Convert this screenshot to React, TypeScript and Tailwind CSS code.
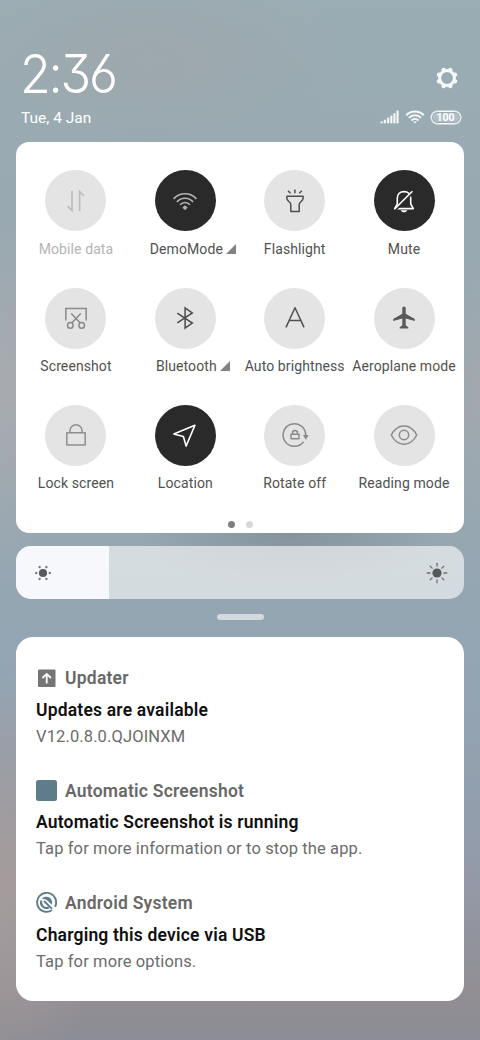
import type { ReactNode } from 'react';
import clsx from 'clsx';

interface Tile {
    label: string;
    icon: ReactNode;
    active?: boolean;
    disabled?: boolean;
    expandable?: boolean;
    tone?: string;
}

interface Notice {
    app: string;
    title: string;
    text: string;
    icon: ReactNode;
}

const Glyph = ({ children, width = 1.5 }: { children: ReactNode; width?: number }) => (
    <svg width="32" height="32" viewBox="0 0 32 32" fill="none" stroke="currentColor" strokeWidth={width} strokeLinejoin="round">
        {children}
    </svg>
);

const tiles: Tile[] = [
    {
        label: 'Mobile data',
        disabled: true,
        tone: 'text-[#bdbdbd]',
        icon: (
            <Glyph width={1.7}>
                <path d="M12 6v19.4l-4.4-4.2" strokeLinejoin="miter" />
                <path d="M19.6 26V6.6l4.4 4.4" strokeLinejoin="miter" />
            </Glyph>
        )
    },
    {
        label: 'DemoMode',
        active: true,
        expandable: true,
        tone: 'text-[#b5b5b5]',
        icon: (
            <Glyph width={1.6}>
                <path d="M4.6 13.9a15.2 15.2 0 0 1 22.8 0M7.9 16.9a10.8 10.8 0 0 1 16.2 0M11.1 19.8a6.5 6.5 0 0 1 9.8 0" />
                <path d="M16 20.8l2.2 1.7-2.2 2.3-2.2-2.3z" fill="currentColor" strokeWidth="0.8" />
            </Glyph>
        )
    },
    {
        label: 'Flashlight',
        tone: 'text-[#4f4f4f]',
        icon: (
            <Glyph>
                <path d="M9 5.7l2.5 2.5M15.9 4.6v3.6M22.8 5.7l-2.5 2.5" />
                <path d="M7.9 11.3h16.2v2.3c0 2.6-3.9 3.3-3.9 5.9v6.9h-8.4v-6.9c0-2.6-3.9-3.3-3.9-5.9z" />
            </Glyph>
        )
    },
    {
        label: 'Mute',
        active: true,
        tone: 'text-white',
        icon: (
            <Glyph width={1.6}>
                <path d="M9.3 18.8v-5.6c0-4.2 2.8-6.6 6.7-6.6s6.7 2.4 6.7 6.6v5.6l2.6 4.8H6.7z" />
                <path d="M7.3 25.4L25.3 7.4" stroke="#2a2a2a" strokeWidth="2" />
                <path d="M6.4 24.3L24.4 6.2" />
                <path d="M12.6 25.3h6.8c-.9 1.4-2 2-3.4 2s-2.5-.6-3.4-2z" fill="currentColor" stroke="none" />
            </Glyph>
        )
    },
    {
        label: 'Screenshot',
        tone: 'text-[#8a8a8a]',
        icon: (
            <Glyph>
                <path d="M5.8 18.4V6.6h20.4v11.8" strokeLinejoin="miter" />
                <path d="M11.2 11.5l9.1 9.6M20.8 11.5l-9.1 9.6" />
                <circle cx="10.3" cy="23.4" r="2.8" />
                <circle cx="21.7" cy="23.4" r="2.8" />
            </Glyph>
        )
    },
    {
        label: 'Bluetooth',
        expandable: true,
        tone: 'text-[#4a4a4a]',
        icon: (
            <Glyph>
                <path d="M8.3 11.2l15 9.8-7.2 5V6l7.2 5-15 9.8" strokeLinejoin="miter" />
            </Glyph>
        )
    },
    {
        label: 'Auto brightness',
        tone: 'text-[#4f4f4f]',
        icon: (
            <Glyph>
                <path d="M7 25.4L16 5.8l9 19.6M10.2 18.4h11.6" />
            </Glyph>
        )
    },
    {
        label: 'Aeroplane mode',
        tone: 'text-[#5a5a5a]',
        icon: (
            <Glyph>
                <path
                    d="M16 4.6c1.1 0 1.7.8 1.7 2v5.2l9.1 5.1v2l-9.1-2.4v6.7l2.6 2v1.4h-8.6v-1.4l2.6-2v-6.7l-9.1 2.4v-2l9.1-5.1V6.6c0-1.2.6-2 1.7-2z"
                    fill="currentColor"
                    stroke="none"
                />
            </Glyph>
        )
    },
    {
        label: 'Lock screen',
        tone: 'text-[#8f8f8f]',
        icon: (
            <Glyph>
                <rect x="6.8" y="13.7" width="18.4" height="12.2" />
                <path d="M10 13.7v-2a6 6 0 0 1 12 0v2" />
            </Glyph>
        )
    },
    {
        label: 'Location',
        active: true,
        tone: 'text-white',
        icon: (
            <Glyph width={1.6}>
                <path d="M25.9 6.2L4.8 14.9l9.6 2.6 2.7 9.6z" />
            </Glyph>
        )
    },
    {
        label: 'Rotate off',
        tone: 'text-[#8a8a8a]',
        icon: (
            <Glyph>
                <path d="M24.5 22.7A11.3 11.3 0 1 1 26.7 16" />
                <path d="M24 16.1h5.6l-2.8 4.6z" fill="currentColor" stroke="none" />
                <rect x="12" y="15.2" width="8" height="4.6" />
                <path d="M13.5 15.2v-1.1a2.5 2.5 0 0 1 5 0v1.1" />
            </Glyph>
        )
    },
    {
        label: 'Reading mode',
        tone: 'text-[#8a8a8a]',
        icon: (
            <Glyph>
                <path d="M3.3 16C6.2 10 10.7 6.9 16 6.9S25.8 10 28.7 16C25.8 22 21.3 25.2 16 25.2S6.2 22 3.3 16z" />
                <circle cx="16" cy="16" r="4.7" />
            </Glyph>
        )
    }
];

const notices: Notice[] = [
    {
        app: 'Updater',
        title: 'Updates are available',
        text: 'V12.0.8.0.QJOINXM',
        icon: (
            <svg width="21" height="21" viewBox="0 0 21 21" fill="none">
                <rect x="2" y="1.5" width="17.5" height="17.5" rx="1" fill="#757575" />
                <path d="M10.7 15.5V6.3M6.4 10l4.3-4.1L15 10" stroke="#fff" strokeWidth="1.8" />
            </svg>
        )
    },
    {
        app: 'Automatic Screenshot',
        title: 'Automatic Screenshot is running',
        text: 'Tap for more information or to stop the app.',
        icon: <div className="-mt-px size-[21px] rounded-[2.5px] bg-[#5e7d8a]" />
    },
    {
        app: 'Android System',
        title: 'Charging this device via USB',
        text: 'Tap for more options.',
        icon: (
            <svg className="-mt-px" width="21" height="21" viewBox="0 0 21 21" fill="none" stroke="#5e7d8a">
                <path d="M15.8 18.3A9.5 9.5 0 1 1 19 14.8" strokeWidth="1.9" />
                <path d="M12.8 15.5A5.5 5.5 0 0 1 5.4 8.5" strokeWidth="2" />
                <path d="M5.8 6.6C8.5 4 12.8 4.2 15 7c1.3 1.8 1.4 3.8.8 5.8L10.5 7.8z" fill="#5e7d8a" stroke="none" />
                <path d="M8 9l8 7.900" strokeWidth="2" />
            </svg>
        )
    }
];

const GearIcon = () => (
    <svg width="24" height="24" viewBox="-12 -12 24 24" fill="none" stroke="#f7fafb">
        <circle r="7.4" strokeWidth="3" />
        {[22.5, 67.5, 112.5, 157.5, 202.5, 247.5, 292.5, 337.5].map((angle) => (
            <path key={angle} d="M-1.3-8.200L-1-9.800H1L1.300-8.200z" fill="#f7fafb" strokeWidth="1.8" strokeLinejoin="round" transform={`rotate(${angle})`} />
        ))}
    </svg>
);

const SignalIcon = () => (
    <svg width="19" height="14" viewBox="0 0 19 14" fill="#f7fafb">
        <rect x="0.5" y="11.5" width="2.2" height="1.8" />
        <rect x="3.8" y="9.8" width="2.1" height="3.5" />
        <rect x="7.1" y="7.7" width="2.1" height="5.6" />
        <rect x="10.3" y="5.6" width="2.1" height="7.7" />
        <rect x="13.4" y="3.2" width="2.1" height="10.1" />
        <rect x="16.5" y="0.6" width="2.1" height="12.7" />
    </svg>
);

const WifiIcon = () => (
    <svg width="20" height="14" viewBox="0 0 20 14" fill="none" stroke="#f7fafb" strokeWidth="2">
        <path d="M1.2 5.2a12.3 12.3 0 0 1 17.6 0M3.9 7.9a8.5 8.5 0 0 1 12.2 0M6.5 10.5a5 5 0 0 1 7 0" />
        <path d="M8 11.6h4l-2 2z" fill="#f7fafb" stroke="none" />
    </svg>
);

const BatteryBadge = () => (
    <div className="flex h-[13px] w-[30px] rounded-full border border-[#f7fafb] p-px ring-[0.5px] ring-[#f7fafb]">
        <div className="flex flex-1 items-center justify-center rounded-full bg-white/25">
            <span className="text-[10.5px] leading-[9px] font-bold text-white">100</span>
        </div>
    </div>
);

const QuickTile = ({ tile }: { tile: Tile }) => (
    <div className="flex h-[117.3px] flex-col items-center">
        <div
            className={clsx(
                'flex size-[61px] shrink-0 items-center justify-center rounded-full',
                tile.active ? 'bg-[#2a2a2a]' : 'bg-[#e4e4e4]',
                tile.tone
            )}
        >
            {tile.icon}
        </div>
        <div
            className={clsx(
                'mt-[7.4px] flex items-center text-[14px] leading-[20px] tracking-[0.1px] whitespace-nowrap',
                tile.disabled ? 'text-[#b5b5b5]' : 'text-[#515151]',
                tile.expandable && 'pl-[2px]'
            )}
        >
            {tile.label}
            {tile.expandable && (
                <svg className="-mr-[13px] ml-[3px]" width="10" height="10" viewBox="0 0 10 10">
                    <path d="M10 0v10H0z" fill="#828282" />
                </svg>
            )}
        </div>
    </div>
);

const BrightnessBar = () => (
    <div className="mt-[13px] flex h-[53px] overflow-hidden rounded-[15px] bg-white/60">
        <div className="flex w-[93px] items-center bg-[#f6f8fb] pl-[18px]">
            <svg width="18" height="18" viewBox="-9 -9 18 18" fill="#575a5c">
                <circle r="4.1" />
                {[0, 60, 120, 180, 240, 300].map((angle) => (
                    <circle key={angle} cx="6.8" r="1.2" fill="#77797b" transform={`rotate(${angle})`} />
                ))}
            </svg>
        </div>
        <div className="flex flex-1 items-center justify-end pr-[15px]">
            <svg width="24" height="24" viewBox="-12 -12 24 24" fill="#55595c">
                <circle r="4.6" />
                {[0, 45, 90, 135, 180, 225, 270, 315].map((angle) => (
                    <path key={angle} d="M6.9 0h2.8" stroke="#6b6f72" strokeWidth="1.3" strokeLinecap="round" transform={`rotate(${angle})`} />
                ))}
            </svg>
        </div>
    </div>
);

const NoticeRow = ({ notice }: { notice: Notice }) => (
    <div className="h-[112.5px]">
        <div className="flex h-[24px] items-center gap-2">
            {notice.icon}
            <span className="text-[17.5px] leading-[24px] font-semibold tracking-[0.23px] text-[#686868]">{notice.app}</span>
        </div>
        <div className="mt-[7.5px] text-[17.5px] leading-[24px] font-semibold tracking-[0.19px] whitespace-nowrap text-[#101010]">{notice.title}</div>
        <div className="mt-[3px] text-[16.5px] leading-[24px] tracking-[0.12px] whitespace-nowrap text-[#6c6c6c]">{notice.text}</div>
    </div>
);

const App = () => {
    return (
        <div className="h-[1040px] w-[480px] overflow-hidden bg-[radial-gradient(ellipse_110px_210px_at_0px_880px,#a69c9b_0%,transparent_100%),radial-gradient(ellipse_70px_190px_at_0px_390px,#a8abaf_0%,transparent_100%),radial-gradient(ellipse_40px_150px_at_480px_390px,#a3a9ae_0%,transparent_100%),radial-gradient(ellipse_150px_50px_at_290px_535px,#85949c_0%,transparent_100%),radial-gradient(ellipse_200px_100px_at_150px_60px,#9ea8ad_0%,transparent_100%),linear-gradient(180deg,#9badb4_0%,#98a9b2_20%,#97a8b1_45%,#93a5b3_65%,#939cab_82%,#918e93_96%,#8b8c95_100%)] px-4 font-['Roboto',sans-serif]">
            <header className="flex h-[142px] justify-between pt-[45px] pr-[3px] pl-[5px] text-white">
                <div>
                    <div className="-ml-px h-[58px] origin-left scale-x-[0.95] font-['Inter',sans-serif] text-[53px] leading-[58px] font-light tracking-[-2.4px] [font-feature-settings:'cv03','cv09']">
                        2:36
                    </div>
                    <div className="mt-[5px] text-[15.5px] leading-[20px]">Tue, 4 Jan</div>
                </div>
                <div className="flex flex-col items-end pt-[21px]">
                    <div className="pr-[2px]">
                        <GearIcon />
                    </div>
                    <div className="mt-[20px] flex items-center gap-[6px] pr-[0.5px]">
                        <SignalIcon />
                        <WifiIcon />
                        <BatteryBadge />
                    </div>
                </div>
            </header>

            <section className="h-[391px] rounded-[13px] bg-white px-[5.3px] pt-[28.3px]">
                <div className="grid grid-cols-4">
                    {tiles.map((tile) => (
                        <QuickTile key={tile.label} tile={tile} />
                    ))}
                </div>
                <div className="-mt-[1.2px] flex justify-center gap-[11px]">
                    <span className="size-[7px] rounded-full bg-[#7f7f7f]" />
                    <span className="size-[7px] rounded-full bg-[#d8d8d8]" />
                </div>
            </section>

            <BrightnessBar />

            <div className="mx-auto mt-[15px] h-[6px] w-[47px] rounded-full bg-[#d3dadf]" />

            <section className="mt-[17px] h-[364px] rounded-[17px] bg-white px-5 pt-[29px]">
                {notices.map((notice) => (
                    <NoticeRow key={notice.app} notice={notice} />
                ))}
            </section>
        </div>
    );
};

export default App;
